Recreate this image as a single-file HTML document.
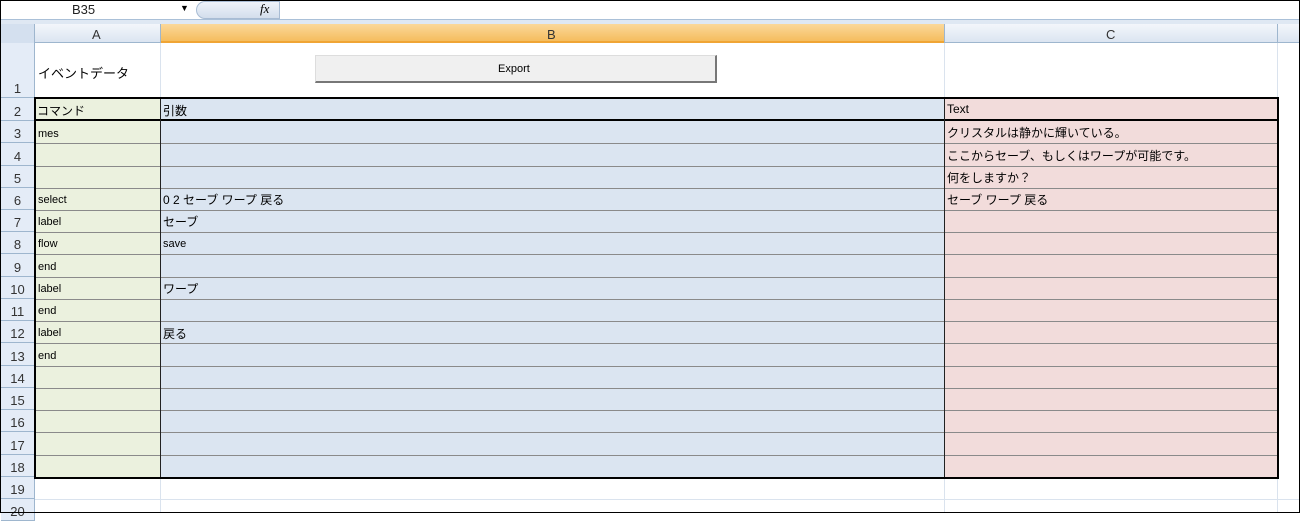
<!DOCTYPE html>
<html><head><meta charset="utf-8"><style>
*{margin:0;padding:0;box-sizing:border-box}
body{width:1300px;height:513px;overflow:hidden;background:#fff;font-family:"Liberation Sans","Noto Sans CJK JP",sans-serif;position:relative}
.a{position:absolute}
.rh{position:absolute;left:1px;width:34px;background:#e4ecf7;border-bottom:1px solid #9eb6ce;border-right:1px solid #9eb6ce;color:#333;font-size:13px;text-align:center;display:flex;align-items:flex-end;justify-content:center;padding-bottom:1px}
.t{position:absolute;font-size:12px;color:#000;white-space:nowrap}
.s{font-size:11px}
.hl{position:absolute;left:35px;width:1242px;height:1px;background:#8a8a8a}
</style></head><body>
<div class="a" style="left:0;top:0;width:1300px;height:513px;border:1px solid #000;z-index:50"></div>
<div class="a" style="left:1px;top:1px;width:1298px;height:19px;background:#fff;border-bottom:1px solid #aac0d8"></div>
<div class="t" style="left:72px;top:2px;font-size:13px;color:#222">B35</div>
<div class="t" style="left:180px;top:3px;font-size:9px">▼</div>
<div class="a" style="left:196px;top:1px;width:84px;height:18px;background:linear-gradient(#eef3fa,#d3deec);border:1px solid #a8bcd4;border-radius:9px 0 0 9px"></div>
<div class="t" style="left:260px;top:1px;font-style:italic;font-family:'Liberation Serif',serif;font-size:13px">fx</div>
<div class="a" style="left:1px;top:20px;width:1298px;height:4px;background:#dfe8f3"></div>
<div class="a" style="left:1px;top:24px;width:1298px;height:19px;background:linear-gradient(#f3f6fb,#dbe5f1);border-bottom:1px solid #9eb6ce"></div>
<div class="a" style="left:1px;top:24px;width:34px;height:19px;background:#d4e0ef;border-right:1px solid #9eb6ce"></div>
<div class="a" style="left:160px;top:24px;width:784px;height:19px;background:linear-gradient(#fbd89a,#f5bd5e);border-bottom:2px solid #f0a535"></div>
<div class="t" style="left:92px;top:27px;font-size:13px;color:#333">A</div>
<div class="t" style="left:547px;top:27px;font-size:13px;color:#333">B</div>
<div class="t" style="left:1106px;top:27px;font-size:13px;color:#333">C</div>
<div class="a" style="left:160px;top:24px;width:1px;height:19px;background:#9eb6ce"></div>
<div class="a" style="left:944px;top:24px;width:1px;height:19px;background:#9eb6ce"></div>
<div class="a" style="left:1277px;top:24px;width:1px;height:19px;background:#9eb6ce"></div>
<div class="a" style="left:160px;top:43px;width:1px;height:470px;background:#dae3ee"></div>
<div class="a" style="left:944px;top:43px;width:1px;height:470px;background:#dae3ee"></div>
<div class="a" style="left:1277px;top:43px;width:1px;height:470px;background:#dae3ee"></div>
<div class="a" style="left:35px;top:499px;width:1264px;height:1px;background:#dae3ee"></div>
<div class="rh" style="top:43px;height:55px">1</div>
<div class="rh" style="top:98px;height:23px">2</div>
<div class="rh" style="top:121px;height:22px">3</div>
<div class="rh" style="top:143px;height:23px">4</div>
<div class="rh" style="top:166px;height:22px">5</div>
<div class="rh" style="top:188px;height:22px">6</div>
<div class="rh" style="top:210px;height:22px">7</div>
<div class="rh" style="top:232px;height:22px">8</div>
<div class="rh" style="top:254px;height:23px">9</div>
<div class="rh" style="top:277px;height:22px">10</div>
<div class="rh" style="top:299px;height:22px">11</div>
<div class="rh" style="top:321px;height:22px">12</div>
<div class="rh" style="top:343px;height:23px">13</div>
<div class="rh" style="top:366px;height:22px">14</div>
<div class="rh" style="top:388px;height:22px">15</div>
<div class="rh" style="top:410px;height:22px">16</div>
<div class="rh" style="top:432px;height:23px">17</div>
<div class="rh" style="top:455px;height:22px">18</div>
<div class="rh" style="top:477px;height:22px">19</div>
<div class="rh" style="top:499px;height:22px">20</div>
<div class="t" style="left:38px;top:63px;font-size:13px">イベントデータ</div>
<div class="a" style="left:315px;top:55px;width:402px;height:28px;background:#f0f0f0;border:1px solid #ddd;border-right:2px solid #777;border-bottom:2px solid #777"></div>
<div class="t" style="left:498px;top:63px;font-size:11px">Export</div>
<div class="a" style="left:35px;top:98px;width:125px;height:379px;background:#ebf1de"></div>
<div class="a" style="left:160px;top:98px;width:784px;height:379px;background:#dbe5f1"></div>
<div class="a" style="left:944px;top:98px;width:333px;height:379px;background:#f2dcdb"></div>
<div class="hl" style="top:143px"></div><div class="hl" style="top:166px"></div><div class="hl" style="top:188px"></div>
<div class="hl" style="top:210px"></div><div class="hl" style="top:232px"></div><div class="hl" style="top:254px"></div>
<div class="hl" style="top:277px"></div><div class="hl" style="top:299px"></div><div class="hl" style="top:321px"></div>
<div class="hl" style="top:343px"></div><div class="hl" style="top:366px"></div><div class="hl" style="top:388px"></div>
<div class="hl" style="top:410px"></div><div class="hl" style="top:432px"></div><div class="hl" style="top:455px"></div>
<div class="a" style="left:35px;top:119px;width:1242px;height:2px;background:#000"></div>
<div class="a" style="left:160px;top:98px;width:1px;height:379px;background:#222"></div>
<div class="a" style="left:944px;top:98px;width:1px;height:379px;background:#222"></div>
<div class="a" style="left:34px;top:97px;width:1245px;height:382px;border:2px solid #000"></div>
<div class="t" style="left:37px;top:102px">コマンド</div>
<div class="t" style="left:163px;top:102px">引数</div>
<div class="t" style="left:947px;top:102px">Text</div>
<div class="t s" style="left:38px;top:128px">mes</div>
<div class="t" style="left:947px;top:124px">クリスタルは静かに輝いている。</div>
<div class="t" style="left:947px;top:147px">ここからセーブ、もしくはワープが可能です。</div>
<div class="t" style="left:947px;top:169px">何をしますか？</div>
<div class="t s" style="left:38px;top:194px">select</div>
<div class="t" style="left:163px;top:191px">0 2 セーブ ワープ 戻る</div>
<div class="t" style="left:947px;top:191px">セーブ ワープ 戻る</div>
<div class="t s" style="left:38px;top:216px">label</div>
<div class="t" style="left:163px;top:213px">セーブ</div>
<div class="t s" style="left:38px;top:238px">flow</div>
<div class="t s" style="left:163px;top:238px">save</div>
<div class="t s" style="left:38px;top:261px">end</div>
<div class="t s" style="left:38px;top:283px">label</div>
<div class="t" style="left:163px;top:280px">ワープ</div>
<div class="t s" style="left:38px;top:305px">end</div>
<div class="t s" style="left:38px;top:327px">label</div>
<div class="t" style="left:163px;top:325px">戻る</div>
<div class="t s" style="left:38px;top:350px">end</div>
</body></html>
